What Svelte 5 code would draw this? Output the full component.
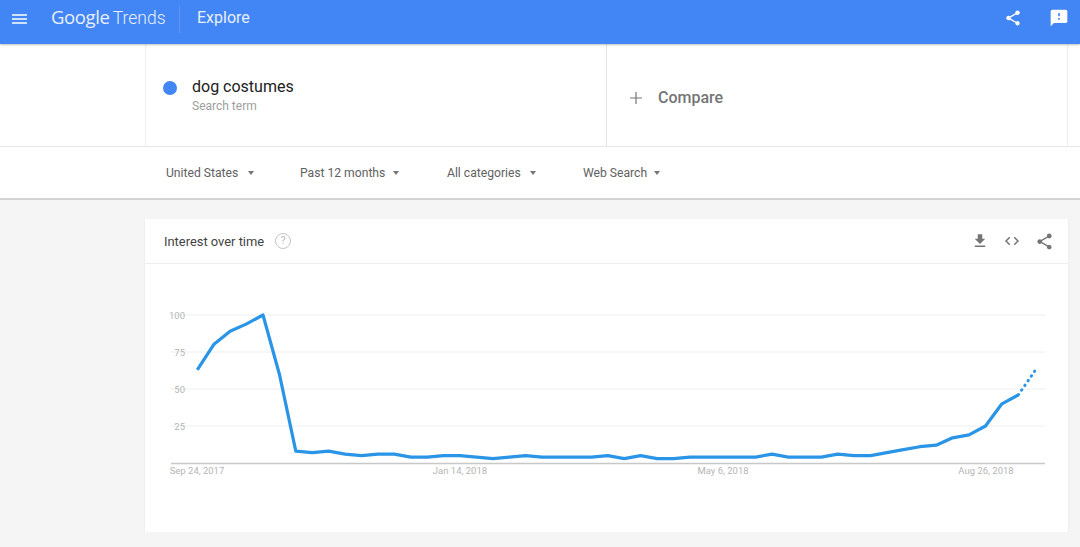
<script>
  const filters = [
    { label: 'United States', gap: 9.5, width: 134 },
    { label: 'Past 12 months', gap: 7.5, width: 147 },
    { label: 'All categories', gap: 9.5, width: 136 },
    { label: 'Web Search', gap: 6.5, width: 90 }
  ];

  // weekly values, last one is the partial week (dotted)
  const values = [
    63, 80, 89, 94, 100, 60, 8, 7, 8, 6, 5, 6, 6, 4, 4, 5, 5, 4, 3, 4, 5, 4, 4, 4, 4, 5,
    3, 5, 3, 3, 4, 4, 4, 4, 4, 6, 4, 4, 4, 6, 5, 5, 7, 9, 11, 12, 17, 19, 25, 40, 46, 62
  ];

  const grid = [100, 75, 50, 25];
  const dates = [
    { label: 'Sep 24, 2017', x: 52 },
    { label: 'Jan 14, 2018', x: 315 },
    { label: 'May 6, 2018', x: 578 },
    { label: 'Aug 26, 2018', x: 841 }
  ];

  const x = (i) => 52.3 + i * 16.42;
  const y = (v) => 199 - v * 1.48;

  const points = values.map((v, i) => `${x(i).toFixed(1)},${y(v).toFixed(1)}`);
  const solid = points.slice(0, -1).join(' ');
  const dotted = points.slice(-2).join(' ');
</script>

<header class="topbar">
  <button class="menu" aria-label="Menu">
    <svg width="15" height="10" viewBox="0 0 15 10"><path d="M0 1h15M0 5h15M0 9h15" stroke="#fff" stroke-width="1.6" /></svg>
  </button>
  <span class="logo"><span class="google">Google</span> <span class="trends">Trends</span></span>
  <span class="divider"></span>
  <span class="page">Explore</span>
  <span class="spacer"></span>
  <svg class="share" width="18" height="18" viewBox="0 0 24 24" fill="#fff">
    <path d="M18 16.08c-.76 0-1.44.3-1.96.77L8.91 12.7c.05-.23.09-.46.09-.7s-.04-.47-.09-.7l7.05-4.11c.54.5 1.25.81 2.04.81 1.66 0 3-1.34 3-3s-1.34-3-3-3-3 1.34-3 3c0 .24.04.47.09.7L8.04 9.81C7.5 9.31 6.79 9 6 9c-1.66 0-3 1.34-3 3s1.34 3 3 3c.79 0 1.5-.31 2.04-.81l7.12 4.16c-.05.21-.08.43-.08.65 0 1.61 1.31 2.92 2.92 2.92s2.92-1.31 2.92-2.92-1.31-2.92-2.92-2.92z" />
  </svg>
  <svg class="feedback" width="20" height="20" viewBox="0 0 24 24" fill="#fff">
    <path d="M20 2H4c-1.1 0-2 .9-2 2v18l4-4h14c1.1 0 2-.9 2-2V4c0-1.1-.9-2-2-2zm-7 12h-2v-2h2v2zm0-4h-2V6h2v4z" />
  </svg>
</header>

<section class="search-band">
  <div class="search-inner">
    <div class="term">
      <span class="dot"></span>
      <div>
        <div class="term-name">dog costumes</div>
        <div class="term-type">Search term</div>
      </div>
    </div>
    <div class="compare">
      <svg width="12" height="12" viewBox="0 0 12 12"><path d="M6 0v12M0 6h12" stroke="#757575" stroke-width="1.2" /></svg>
      <span>Compare</span>
    </div>
  </div>
</section>

<nav class="filters">
  {#each filters as f}
    <div class="filter" style="width: {f.width}px">
      <span>{f.label}</span>
      <span class="caret" style="margin-left: {f.gap}px"></span>
    </div>
  {/each}
</nav>

<main class="content">
  <article class="card">
    <div class="card-head">
      <span class="card-title">Interest over time</span>
      <span class="help">?</span>
      <span class="spacer"></span>
      <svg class="tool" width="18" height="18" viewBox="0 0 24 24" fill="#757575"><path d="M19 9h-4V3H9v6H5l7 7 7-7zM5 18v2h14v-2H5z" /></svg>
      <svg class="tool" width="18" height="18" viewBox="0 0 24 24" fill="none" stroke="#757575" stroke-width="2"><path d="M9 7l-5 5 5 5M15 7l5 5-5 5" /></svg>
      <svg class="tool" width="19" height="19" viewBox="0 0 24 24" fill="#757575">
        <path d="M18 16.08c-.76 0-1.44.3-1.96.77L8.91 12.7c.05-.23.09-.46.09-.7s-.04-.47-.09-.7l7.05-4.11c.54.5 1.25.81 2.04.81 1.66 0 3-1.34 3-3s-1.34-3-3-3-3 1.34-3 3c0 .24.04.47.09.7L8.04 9.81C7.5 9.31 6.79 9 6 9c-1.66 0-3 1.34-3 3s1.34 3 3 3c.79 0 1.5-.31 2.04-.81l7.12 4.16c-.05.21-.08.43-.08.65 0 1.61 1.31 2.92 2.92 2.92s2.92-1.31 2.92-2.92-1.31-2.92-2.92-2.92z" />
      </svg>
    </div>
    <svg class="chart" width="923" height="268" viewBox="0 0 923 268">
      {#each grid as g}
        <line x1="26" x2="900" y1={y(g)} y2={y(g)} stroke="#eeeeee" />
        <text class="axis" x="40" y={y(g) + 4} text-anchor="end">{g}</text>
      {/each}
      <line x1="26" x2="900" y1="199.5" y2="199.5" stroke="#c8c8c8" stroke-width="1.5" />
      {#each dates as d}
        <text class="axis" x={d.x} y="210" text-anchor="middle">{d.label}</text>
      {/each}
      <polyline points={solid} fill="none" stroke="#2a94e6" stroke-width="3.2" stroke-linejoin="round" />
      <polyline points={dotted} fill="none" stroke="#2a94e6" stroke-width="3" stroke-linecap="round" stroke-dasharray="0.5 5.2" />
    </svg>
  </article>
</main>

<style>
  :global(body) {
    margin: 0;
    background: #f5f5f5;
    font-family: Roboto, 'Liberation Sans', sans-serif;
    overflow: hidden;
  }

  .topbar {
    height: 44px;
    box-sizing: border-box;
    display: flex;
    align-items: center;
    padding: 0 12px 6px 12px;
    background: #4285f4;
    color: #fff;
    box-shadow: 0 1px 2px rgba(0, 0, 0, 0.25);
    position: relative;
    z-index: 1;
  }

  .menu {
    width: 15px;
    height: 10px;
    padding: 0;
    border: none;
    background: none;
    display: flex;
    margin-right: 24px;
  }

  .logo {
    font-size: 17.5px;
    opacity: 0.88;
    width: 126px;
    white-space: nowrap;
    margin-bottom: 6px;
  }

  .google {
    font-family: 'Open Sans', sans-serif;
    font-size: 18.5px;
    font-weight: 500;
    letter-spacing: -0.4px;
  }

  .trends {
    font-weight: 300;
    margin-left: -1px;
  }

  .divider {
    width: 1px;
    height: 28px;
    margin: 0 17px 0 2px;
    background: #5b94f1;
  }

  .page {
    font-size: 16px;
    opacity: 0.88;
    margin-bottom: 3px;
  }

  .spacer {
    flex: 1;
  }

  .share {
    margin-right: 27px;
    margin-bottom: 2px;
  }

  .feedback {
    margin-bottom: 2px;
    margin-right: -1px;
  }

  .search-band {
    height: 103px;
    background: #fff;
    border-bottom: 1px solid #e8e8e8;
    box-sizing: border-box;
  }

  .search-inner {
    width: 923px;
    height: 100%;
    margin-left: 145px;
    box-sizing: border-box;
    border-left: 1px solid #eeeeee;
    border-right: 1px solid #eeeeee;
    display: flex;
  }

  .term {
    width: 461px;
    box-sizing: border-box;
    display: flex;
    align-items: flex-start;
    padding: 33px 0 0 17px;
    border-right: 1px solid #e6e6e6;
  }

  .dot {
    width: 14px;
    height: 14px;
    margin: 4px 15px 0 0;
    border-radius: 50%;
    background: #4285f4;
  }

  .term-name {
    font-size: 16px;
    line-height: 20px;
    color: #212121;
  }

  .term-type {
    font-size: 12px;
    line-height: 18px;
    color: #9e9e9e;
  }

  .compare {
    display: flex;
    align-items: center;
    padding: 5px 0 0 23px;
    color: #757575;
    font-size: 16px;
    font-weight: 500;
  }

  .compare svg {
    margin-right: 16px;
  }

  .filters {
    height: 53px;
    box-sizing: border-box;
    background: #fff;
    border-bottom: 2px solid #d2d2d2;
    display: flex;
    align-items: center;
    padding-left: 166px;
    padding-top: 1px;
  }

  .filter {
    display: flex;
    align-items: center;
    font-size: 12.15px;
    color: #616161;
  }

  .caret {
    width: 0;
    height: 0;
    border-left: 3.5px solid transparent;
    border-right: 3.5px solid transparent;
    border-top: 4px solid #757575;
  }

  .content {
    padding: 19px 12px 0 145px;
  }

  .card {
    width: 923px;
    height: 313px;
    background: #fff;
    box-shadow: 0 1px 2px rgba(0, 0, 0, 0.08), 0 2px 1px -1px rgba(0, 0, 0, 0.14);
  }

  .card-head {
    height: 45px;
    box-sizing: border-box;
    border-bottom: 1px solid #eeeeee;
    display: flex;
    align-items: center;
    padding: 0 14px 0 19px;
  }

  .card-title {
    font-size: 12.9px;
    color: #424242;
  }

  .help {
    width: 14px;
    height: 14px;
    margin-left: 11px;
    border: 1px solid #c4c4c4;
    border-radius: 50%;
    color: #bdbdbd;
    font-size: 11px;
    line-height: 14px;
    text-align: center;
  }

  .tool {
    margin-left: 14px;
  }

  .chart {
    display: block;
  }

  .axis {
    font-size: 9.5px;
    fill: #b5b5b5;
    font-family: Roboto, sans-serif;
  }
</style>
